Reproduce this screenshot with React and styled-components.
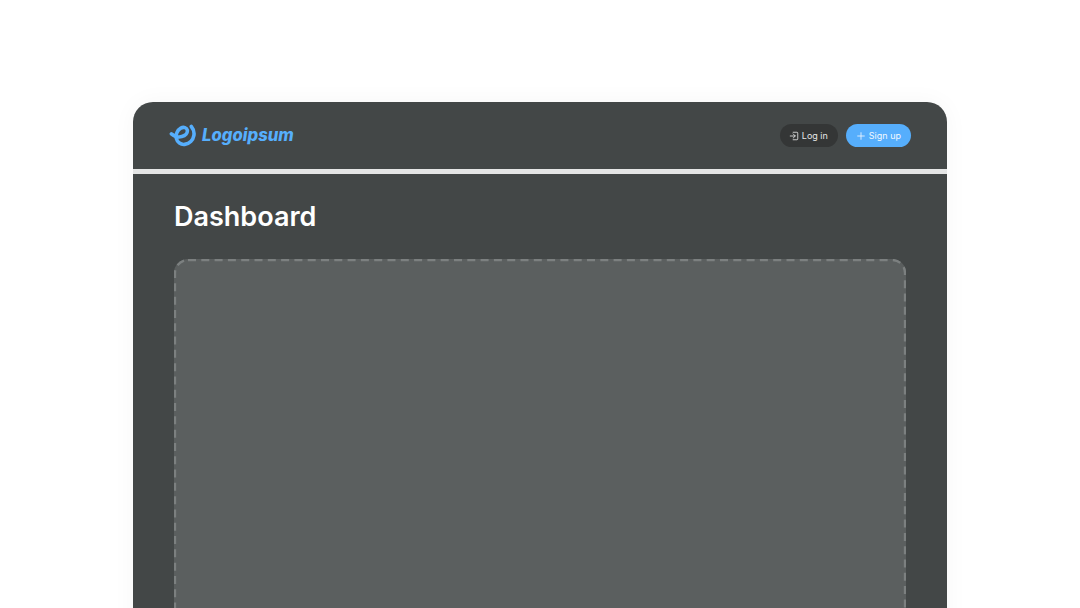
import React from "react";
import styled, { createGlobalStyle } from "styled-components";

const Global = createGlobalStyle`
  html, body { margin: 0; padding: 0; background: #fff; height: 100%; overflow: hidden; }
  body { font-family: Inter, "Liberation Sans", sans-serif; }
`;

const Page = styled.div`
  height: 608px;
  overflow: hidden;
  padding: 102px 133px 0;
  box-sizing: border-box;
  background: #fff;
`;

const Panel = styled.main`
  width: 814px;
  height: 560px;
  background: #434747;
  border-radius: 20px 20px 0 0;
  box-shadow: 0 0 24px rgba(0, 0, 0, 0.04);
`;

const Header = styled.header`
  height: 67px;
  box-sizing: border-box;
  display: flex;
  align-items: center;
  justify-content: space-between;
  padding: 0 36px;
`;

const Divider = styled.div`
  height: 5px;
  background: #e4e5e5;
`;

const Brand = styled.div`
  display: flex;
  align-items: center;
  gap: 4px;
  color: #56aefc;
`;

const BrandName = styled.span`
  font-family: Inter, sans-serif;
  font-style: italic;
  font-weight: 800;
  font-size: 16.7px;
  line-height: 1;
`;

const Actions = styled.div`
  display: flex;
  gap: 8px;
  align-items: center;
`;

const Pill = styled.button`
  height: 23px;
  border: 0;
  border-radius: 12px;
  padding: 0 10px 0 ${(p) => (p.$primary ? "10px" : "9px")};
  display: flex;
  align-items: center;
  gap: 3px;
  background: ${(p) => (p.$primary ? "#56aefc" : "#343636")};
  color: ${(p) => (p.$primary ? "#f2f8fe" : "#e6e7e7")};
  font-family: Inter, sans-serif;
  font-size: 9px;
  font-weight: 400;
`;

const Content = styled.section`
  padding: 27px 41px 0;
`;

const Title = styled.h1`
  margin: 0;
  color: #fff;
  font-family: Inter, sans-serif;
  font-size: 27px;
  line-height: 32px;
  font-weight: 600;
`;

const Dropzone = styled.div`
  position: relative;
  margin-top: 26px;
  height: 400px;
  background: #5b5f5f;
  border-radius: 14px;
`;

const DashedEdge = styled.svg`
  position: absolute;
  inset: 0;
  width: 732px;
  height: 400px;
`;

const Logo = () => (
  <svg width="29" height="26" viewBox="0 0 29 26" fill="none" stroke="currentColor" strokeWidth="3.6" strokeLinecap="round" strokeLinejoin="round">
    <path d="M2.400 10.800c2.800 2.400 6.800 3.700 10.400 2.800 3.700-1 6-3.800 5.500-6.500-.5-2.500-3.700-3.500-6.500-2-3.600 2-5.300 6.600-4.400 10.500.9 3.700 4.400 6.300 8.300 5.800 4.700-.6 8.400-4.300 9.200-9 .5-3.100-.5-6.400-2.600-8.900" />
  </svg>
);

const LoginIcon = () => (
  <svg width="10" height="10" viewBox="0 0 24 24" fill="none" stroke="currentColor" strokeWidth="2" strokeLinecap="round" strokeLinejoin="round">
    <path d="M10 3h9a2 2 0 0 1 2 2v14a2 2 0 0 1-2 2h-9" />
    <path d="M10 17l5-5-5-5" />
    <path d="M15 12H3" />
  </svg>
);

const PlusIcon = () => (
  <svg width="10" height="10" viewBox="0 0 24 24" fill="none" stroke="currentColor" strokeWidth="2" strokeLinecap="round">
    <path d="M12 4v16M4 12h16" />
  </svg>
);

export default function App() {
  return (
    <>
      <Global />
      <Page>
        <Panel>
          <Header>
            <Brand>
              <Logo />
              <BrandName>Logoipsum</BrandName>
            </Brand>
            <Actions>
              <Pill><LoginIcon />Log in</Pill>
              <Pill $primary><PlusIcon />Sign up</Pill>
            </Actions>
          </Header>
          <Divider />
          <Content>
            <Title>Dashboard</Title>
            <Dropzone>
              <DashedEdge viewBox="0 0 732 400" fill="none">
                <rect x="1" y="1" width="730" height="398" rx="13" stroke="#7c8080" strokeWidth="2.300" strokeDasharray="8 5.300" />
              </DashedEdge>
            </Dropzone>
          </Content>
        </Panel>
      </Page>
    </>
  );
}
